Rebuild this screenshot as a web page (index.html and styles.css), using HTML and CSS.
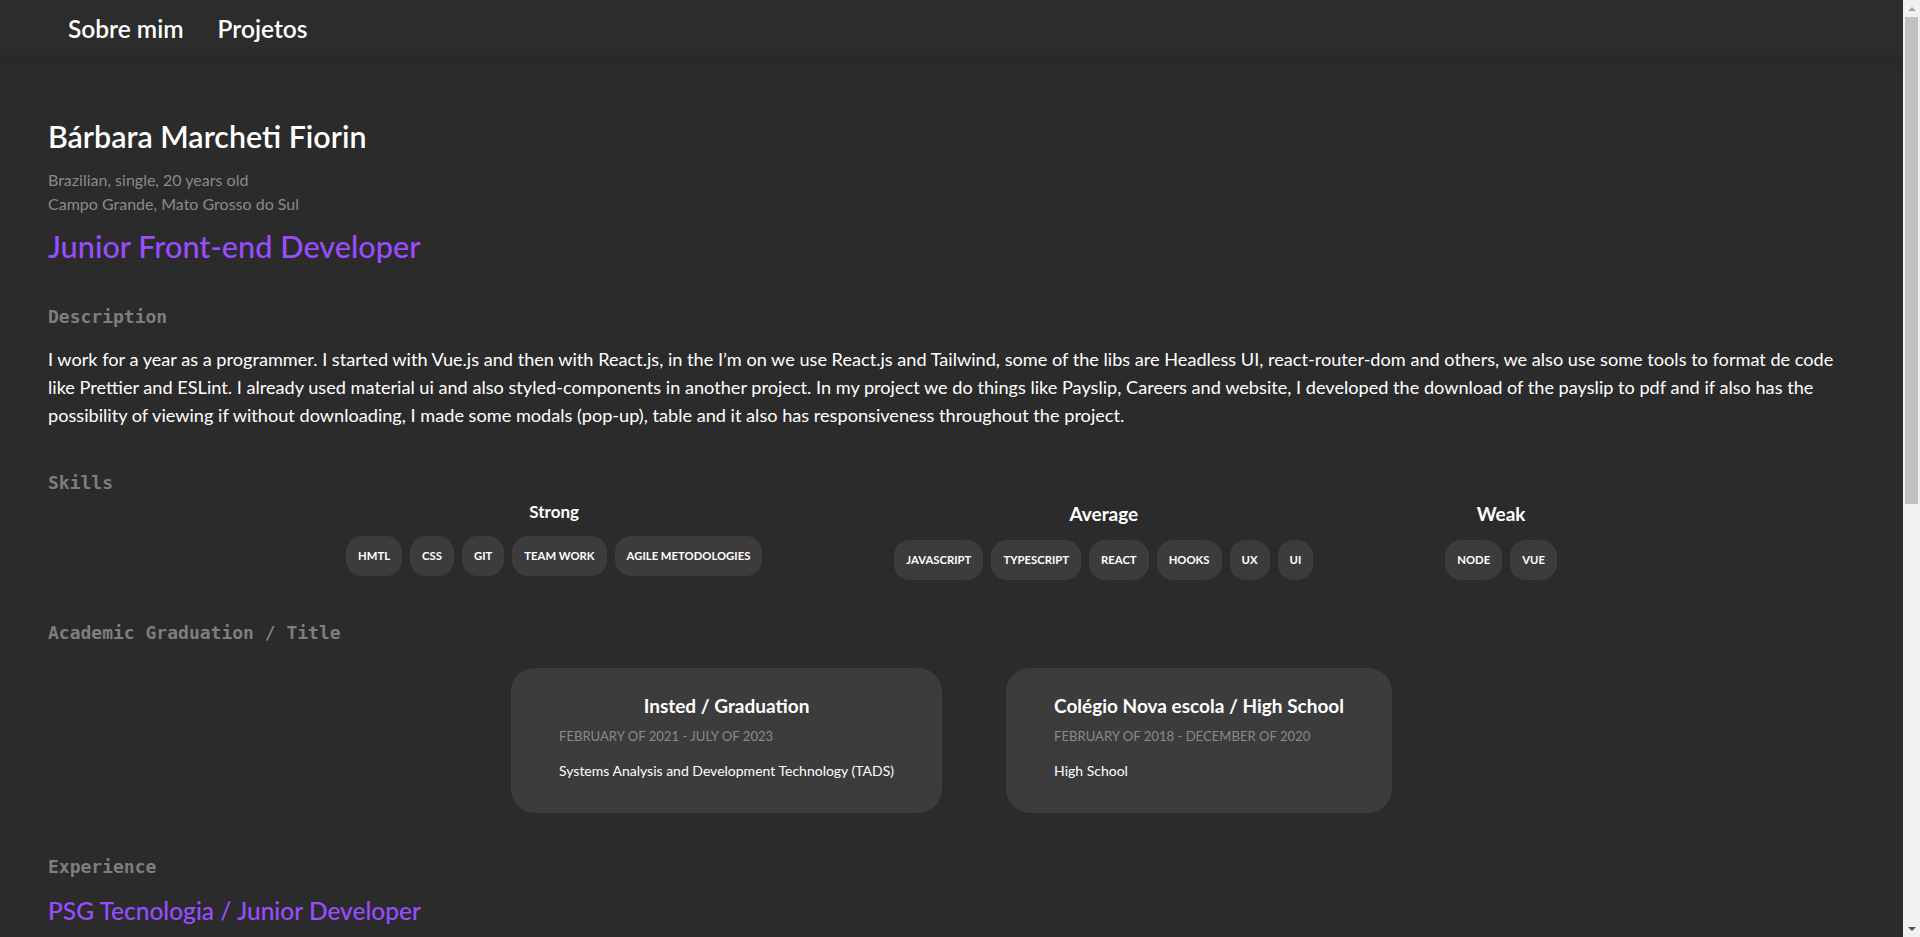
FILE: index.html
```html
<!DOCTYPE html>
<html lang="pt-BR">
<head>
<meta charset="utf-8">
<title>Bárbara Marcheti Fiorin</title>
<link rel="stylesheet" href="styles.css">
</head>
<body>
<nav class="nav">
  <a class="nav-link" href="#sobre">Sobre mim</a>
  <a class="nav-link" href="#projetos">Projetos</a>
</nav>
<main class="main" id="sobre">
  <header class="intro">
    <h1 class="name">Bárbara Marcheti Fiorin</h1>
    <div class="info">
      <p class="info-line">Brazilian, single, 20 years old</p>
      <p class="info-line">Campo Grande, Mato Grosso do Sul</p>
    </div>
    <h2 class="role">Junior Front-end Developer</h2>
  </header>

  <section class="section section-desc">
    <h3 class="section-title">Description</h3>
    <p class="text">I work for a year as a programmer. I started with Vue.js and then with React.js, in the I’m on we use React.js and Tailwind, some of the libs are Headless UI, react-router-dom and others, we also use some tools to format de code like Prettier and ESLint. I already used material ui and also styled-components in another project. In my project we do things like Payslip, Careers and website, I developed the download of the payslip to pdf and if also has the possibility of viewing if without downloading, I made some modals (pop-up), table and it also has responsiveness throughout the project.</p>
  </section>

  <section class="section section-skills">
    <h3 class="section-title">Skills</h3>
    <div class="skills">
      <div class="skill-group">
        <h4 class="skill-label skill-label-sm">Strong</h4>
        <ul class="chips">
          <li class="chip">HMTL</li>
          <li class="chip">CSS</li>
          <li class="chip">GIT</li>
          <li class="chip">TEAM WORK</li>
          <li class="chip">AGILE METODOLOGIES</li>
        </ul>
      </div>
      <div class="skill-group">
        <h4 class="skill-label">Average</h4>
        <ul class="chips">
          <li class="chip">JAVASCRIPT</li>
          <li class="chip">TYPESCRIPT</li>
          <li class="chip">REACT</li>
          <li class="chip">HOOKS</li>
          <li class="chip">UX</li>
          <li class="chip">UI</li>
        </ul>
      </div>
      <div class="skill-group">
        <h4 class="skill-label">Weak</h4>
        <ul class="chips">
          <li class="chip">NODE</li>
          <li class="chip">VUE</li>
        </ul>
      </div>
    </div>
  </section>

  <section class="section section-academic">
    <h3 class="section-title">Academic Graduation / Title</h3>
    <div class="cards">
      <article class="card">
        <h4 class="card-title">Insted / Graduation</h4>
        <p class="card-date">February of 2021 - July of 2023</p>
        <p class="card-text">Systems Analysis and Development Technology (TADS)</p>
      </article>
      <article class="card">
        <h4 class="card-title">Colégio Nova escola / High School</h4>
        <p class="card-date">February of 2018 - December of 2020</p>
        <p class="card-text">High School</p>
      </article>
    </div>
  </section>

  <section class="section section-exp" id="projetos">
    <h3 class="section-title">Experience</h3>
    <h4 class="job">PSG Tecnologia / Junior Developer</h4>
  </section>
</main>

<div class="scrollbar" aria-hidden="true">
  <span class="sb-btn sb-up"></span>
  <span class="sb-track"><span class="sb-thumb"></span></span>
  <span class="sb-btn sb-down"></span>
</div>
</body>
</html>
```

FILE: styles.css
```css
* { box-sizing: border-box; }

html, body {
  margin: 0;
  padding: 0;
  background: #2b2b2b;
}

body {
  padding-right: 17px;
  color: #ffffff;
  font-family: Lato, "Open Sans", sans-serif;
}

h1, h2, h3, h4, p, ul { margin: 0; padding: 0; }

.nav {
  height: 55px;
  padding: 2px 0 0 68px;
  display: flex;
  align-items: center;
  gap: 34px;
  background: #2c2c2c;
  box-shadow: 0 3px 10px rgba(0, 0, 0, 0.12);
  position: relative;
}

.nav-link {
  color: #ffffff;
  text-decoration: none;
  font-size: 24.5px;
  font-weight: 600;
  line-height: 30px;
}

.main {
  padding: 0 48px;
  min-height: 1672px;
}

.name {
  margin-top: 63px;
  font-size: 30.4px;
  line-height: 36px;
  font-weight: 600;
}

.info {
  margin-top: 14px;
}

.info-line {
  font-size: 16px;
  line-height: 24px;
  color: #8a8a8a;
}

.role {
  margin-top: 13px;
  font-size: 30.7px;
  line-height: 36px;
  font-weight: 500;
  color: #9a4dff;
}

.section { margin-top: 38px; }
.section-skills { margin-top: 40px; }
.section-academic { margin-top: 39px; }
.section-exp { margin-top: 40px; }

.section-title {
  font-family: "DejaVu Sans Mono", "Liberation Mono", monospace;
  font-size: 18px;
  line-height: 28px;
  font-weight: 700;
  color: #7e7e7e;
}

.text {
  margin-top: 14px;
  font-size: 18.15px;
  line-height: 28px;
}

.skills {
  margin-top: 3px;
  display: flex;
  justify-content: center;
  align-items: flex-start;
  gap: 132px;
}

.skill-group {
  display: flex;
  flex-direction: column;
  align-items: center;
  gap: 12px;
}

.skill-label {
  font-size: 19px;
  line-height: 28px;
  font-weight: 700;
}

.skill-label-sm {
  font-size: 17px;
  line-height: 24px;
}

.chips {
  list-style: none;
  display: flex;
  gap: 8px;
}

.chip {
  padding: 12px;
  border-radius: 16px;
  background: #3c3c3c;
  font-size: 11.3px;
  line-height: 16px;
  font-weight: 700;
  white-space: nowrap;
}

.cards {
  margin-top: 21px;
  display: flex;
  justify-content: center;
  gap: 64px;
}

.card {
  padding: 24px 48px 32px;
  border-radius: 24px;
  background: #3c3c3c;
}

.card-title {
  text-align: center;
  font-size: 19px;
  line-height: 28px;
  font-weight: 700;
}

.card-date {
  margin-top: 6px;
  font-size: 13.1px;
  line-height: 20px;
  color: #8a8a8a;
  text-transform: uppercase;
}

.card-text {
  margin-top: 15px;
  font-size: 14px;
  line-height: 20px;
}

.job {
  margin-top: 14px;
  font-size: 24.5px;
  line-height: 32px;
  font-weight: 500;
  color: #9a4dff;
}

/* classic browser scrollbar, drawn over the right edge */
.scrollbar {
  position: fixed;
  top: 0;
  right: 0;
  width: 17px;
  height: 100vh;
  background: #f1f1f1;
  display: flex;
  flex-direction: column;
}

.sb-btn {
  flex: none;
  height: 17px;
  display: flex;
  align-items: center;
  justify-content: center;
}

.sb-btn::before {
  content: "";
  border-left: 4px solid transparent;
  border-right: 4px solid transparent;
}

.sb-up::before {
  border-bottom: 4px solid #a3a3a3;
}

.sb-down::before {
  border-top: 4px solid #505050;
}

.sb-track {
  flex: 1;
  padding: 0 2px;
}

.sb-thumb {
  display: block;
  height: 487px;
  background: #c1c1c1;
}
```
